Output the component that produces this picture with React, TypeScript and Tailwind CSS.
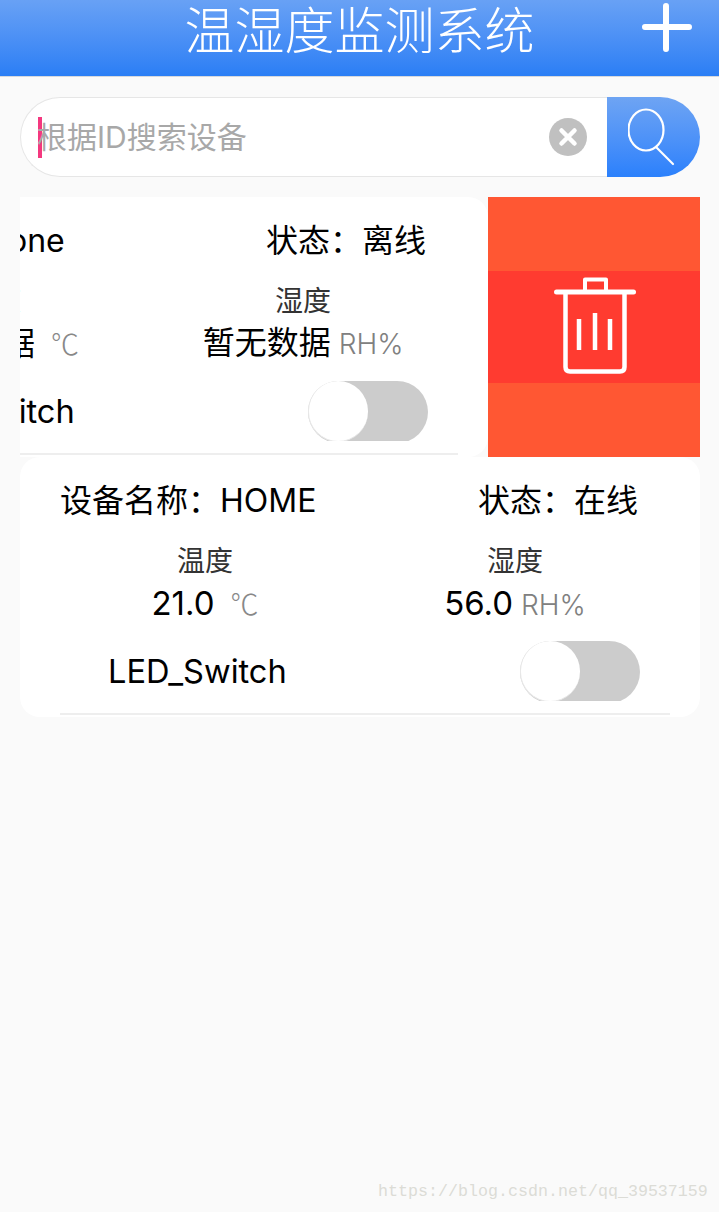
const FONT = "font-['Inter','Noto_Sans_CJK_SC',sans-serif]";

function Toggle() {
  return (
    <div className="h-[60px] w-[120px] shrink-0 overflow-hidden">
      <div className="relative h-[62px] w-[120px] rounded-[31px] bg-[#cccccc]">
        <div className="absolute left-0 top-0 h-[61px] w-[60px] rounded-[31px] border-l border-b border-[#e8e8e8] bg-white" />
      </div>
    </div>
  );
}

function Card({ name, status, temp, hum, valueClass, dividerClass, className }: { name: string; status: string; temp: string; hum: string; valueClass: string; dividerClass: string; className: string }) {
  return (
    <div className={"flex h-[260px] w-[680px] shrink-0 flex-col rounded-[20px] bg-white " + className}>
      <div className="flex h-[86px] items-center pt-[2px]">
        <div className="w-[458px] pl-[40px] text-[32px] leading-[44px] text-black">设备名称：{name}</div>
        <div className="text-[32px] leading-[44px] text-black">状态：{status}</div>
      </div>
      <div className="flex h-[84px]">
        <div className="flex w-[370px] flex-col items-center">
          <div className="h-[36px] text-[28px] leading-[36px] text-[#333333]">温度</div>
          <div className="flex h-[48px] items-baseline">
            <span className={"leading-[48px] text-black " + valueClass}>{temp}</span>
            <span className="ml-[16px] font-['Noto_Sans_CJK_SC',sans-serif] text-[28px] font-light leading-[48px] text-[#888888]">℃</span>
          </div>
        </div>
        <div className="flex w-[250px] flex-col items-center">
          <div className="h-[36px] text-[28px] leading-[36px] text-[#333333]">湿度</div>
          <div className="flex h-[48px] items-baseline">
            <span className={"leading-[48px] text-black " + valueClass}>{hum}</span>
            <span className="ml-[8px] text-[28px] font-light leading-[48px] text-[#808080]">RH%</span>
          </div>
        </div>
      </div>
      <div className="mt-[14px] flex h-[60px] items-center">
        <div className="w-[500px] pl-[88px] text-[32.6px] leading-[44px] text-black">LED_Switch</div>
        <Toggle />
      </div>
      <div className={"mt-[12px] h-[2px] bg-[#eeeeee] " + dividerClass} />
    </div>
  );
}

export default function App() {
  return (
    <div className={"relative h-[1212px] w-[719px] overflow-hidden bg-[#fafafa] " + FONT}>
      <header className="relative flex h-[77px] items-center justify-center border-b border-[#d4d8de] bg-gradient-to-b from-[#68a1f5] to-[#2a7ef5] pb-[14px]">
        <h1 className="text-[50px] font-light leading-[60px] text-white">温湿度监测系统</h1>
        <svg className="absolute left-[640px] top-0" width="56" height="56" viewBox="0 0 56 56" fill="none" stroke="white" strokeWidth="6" strokeLinecap="round">
          <path d="M26 6V49M5 27H49" />
        </svg>
      </header>

      <div className="mx-[20px] mt-[20px] flex h-[80px] w-[680px]">
        <div className="flex w-[587px] items-center rounded-l-[40px] border border-r-0 border-[#e6e6e6] bg-white pl-[17px]">
          <div className="h-[41px] w-[4px] bg-[#f4387f]" />
          <span className="-ml-[5px] flex-1 text-[30px] leading-[40px] text-[#a8a8a8]">根据ID搜索设备</span>
          <svg className="mr-[20px]" width="38" height="38" viewBox="0 0 38 38">
            <circle cx="19" cy="19" r="19" fill="#c0c0c0" />
            <path d="M12.5 12.5L25.5 25.5M25.5 12.5L12.5 25.5" stroke="white" strokeWidth="4.5" strokeLinecap="round" />
          </svg>
        </div>
        <div className="flex w-[93px] items-center justify-center rounded-r-[40px] bg-gradient-to-b from-[#6ea4f3] to-[#2a80fc]">
          <svg width="52" height="58" viewBox="0 0 52 58" fill="none" stroke="white" strokeWidth="2.2" strokeLinecap="round">
            <ellipse cx="18" cy="22" rx="17.5" ry="20.5" />
            <path d="M28 39L45 56" />
          </svg>
        </div>
      </div>

      <div className="mx-[20px] mt-[20px] flex h-[260px] w-[680px] overflow-hidden">
        <Card name="one" status="离线" temp="暂无数据" hum="暂无数据" valueClass="text-[32px]" dividerClass="ml-[212px] mr-[30px]" className="-ml-[212px]" />
        <div className="flex w-[212px] shrink-0 items-center bg-[#ff5733]">
          <div className="flex h-[112px] w-full items-center justify-center bg-[#ff3b30]">
            <svg width="84" height="100" viewBox="0 0 84 100" fill="none" stroke="white" strokeLinecap="round" strokeLinejoin="round">
              <path d="M4.5 15H81.5" strokeWidth="5" />
              <path d="M33 14V2.5H54V14" strokeWidth="4" />
              <path d="M13.5 16V90Q13.5 94.5 18 94.5H68Q72.5 94.5 72.5 90V16" strokeWidth="4.5" />
              <path d="M27 42V73M43 36V73M58 42V73" strokeWidth="4.5" strokeLinecap="butt" />
            </svg>
          </div>
        </div>
      </div>

      <div className="mx-[20px] w-[680px]">
        <Card name="HOME" status="在线" temp="21.0" hum="56.0" valueClass="text-[33px]" dividerClass="mx-[40px] w-[610px]" className="" />
      </div>

      <div className="absolute left-[378px] top-[1181px] font-['Liberation_Mono',monospace] text-[16.67px] leading-[22px] text-[#dcdcd6]">https://blog.csdn.net/qq_39537159</div>
    </div>
  );
}
